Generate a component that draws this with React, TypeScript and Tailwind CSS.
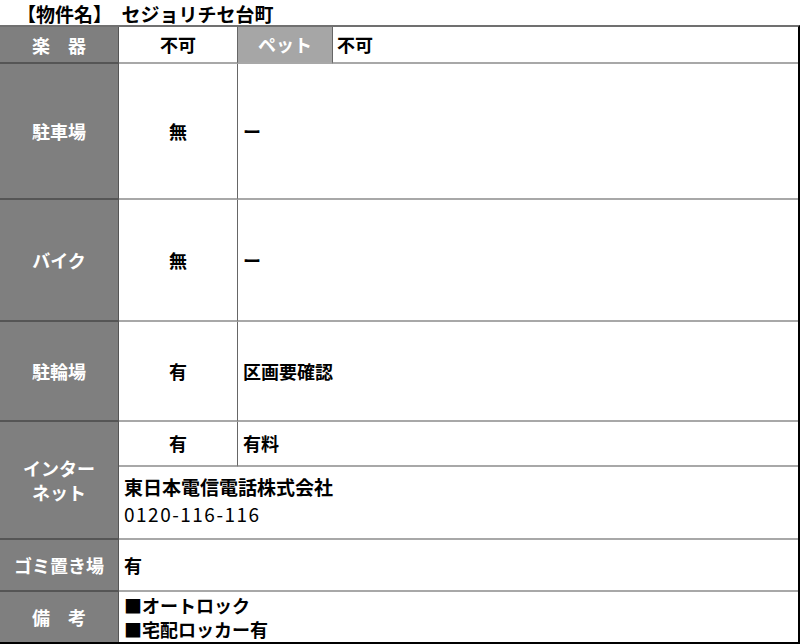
import React from 'react';

const FONT = { fontFamily: '"Noto Sans CJK JP", "Noto Sans", sans-serif' };

const labelCls =
  'w-[119px] shrink-0 flex flex-col items-center justify-center bg-[#7f7f7f] text-white font-bold text-[18px] leading-[24px] border-r border-r-[#555] border-b-2 border-b-[#555] text-center';
const midCls =
  'w-[119px] shrink-0 flex items-center justify-center font-bold text-[18px] border-r border-r-[#666] border-b-2 border-b-[#a8a8a8]';
const restCls =
  'flex-1 flex items-center pl-[5px] font-bold text-[18px] border-b-2 border-b-[#a8a8a8]';

const Row = ({
  h,
  label,
  mid,
  rest,
}: {
  h: string;
  label: React.ReactNode;
  mid: string;
  rest: string;
}) => (
  <div className={`flex ${h}`}>
    <div className={labelCls}>{label}</div>
    <div className={midCls}>{mid}</div>
    <div className={restCls}>{rest}</div>
  </div>
);

export default function App() {
  return (
    <div className="w-[800px] h-[644px] bg-white text-black overflow-hidden" style={FONT}>
      <div className="h-[25px] pl-[17px] text-[19px] font-bold leading-[28px] whitespace-nowrap">
        【物件名】　セジョリチセ台町
      </div>
      <div className="border-t-2 border-t-[#707070] border-r-2 border-r-black border-b-2 border-b-black">
        <div className="flex h-[37px]">
          <div className={labelCls}>楽　器</div>
          <div className={midCls}>不可</div>
          <div className="w-[95px] shrink-0 flex items-center justify-center bg-[#a6a6a6] text-white font-bold text-[18px] border-r border-r-[#666] border-b-2 border-b-[#a8a8a8]">
            ペット
          </div>
          <div className="flex-1 flex items-center pl-[4px] font-bold text-[18px] border-b-2 border-b-[#a8a8a8]">
            不可
          </div>
        </div>
        <Row h="h-[136px]" label="駐車場" mid="無" rest="ー" />
        <Row h="h-[122px]" label="バイク" mid="無" rest="ー" />
        <Row h="h-[100px]" label="駐輪場" mid="有" rest="区画要確認" />
        <div className="flex h-[118px]">
          <div className={labelCls}>
            <span>インター</span>
            <span>ネット</span>
          </div>
          <div className="flex-1 flex flex-col">
            <div className="flex h-[45px]">
              <div className={midCls}>有</div>
              <div className={restCls}>有料</div>
            </div>
            <div className="flex-1 flex flex-col justify-center pl-[5px] border-b-2 border-b-[#a8a8a8] pb-[6px]">
              <span className="font-bold text-[19px] leading-[27px]">東日本電信電話株式会社</span>
              <span className="text-[19px] leading-[27px] tracking-[1.5px]">0120-116-116</span>
            </div>
          </div>
        </div>
        <div className="flex h-[52px]">
          <div className={labelCls}>ゴミ置き場</div>
          <div className="flex-1 flex items-center pl-[5px] font-bold text-[18px] border-b-2 border-b-[#a8a8a8]">
            有
          </div>
        </div>
        <div className="flex h-[50px]">
          <div className="w-[119px] shrink-0 flex items-center justify-center bg-[#7f7f7f] text-white font-bold text-[18px] border-r border-r-[#555]">
            備　考
          </div>
          <div className="flex-1 flex flex-col justify-center pl-[5px] font-bold text-[18px] leading-[24px]">
            <span>■オートロック</span>
            <span>■宅配ロッカー有</span>
          </div>
        </div>
      </div>
    </div>
  );
}
